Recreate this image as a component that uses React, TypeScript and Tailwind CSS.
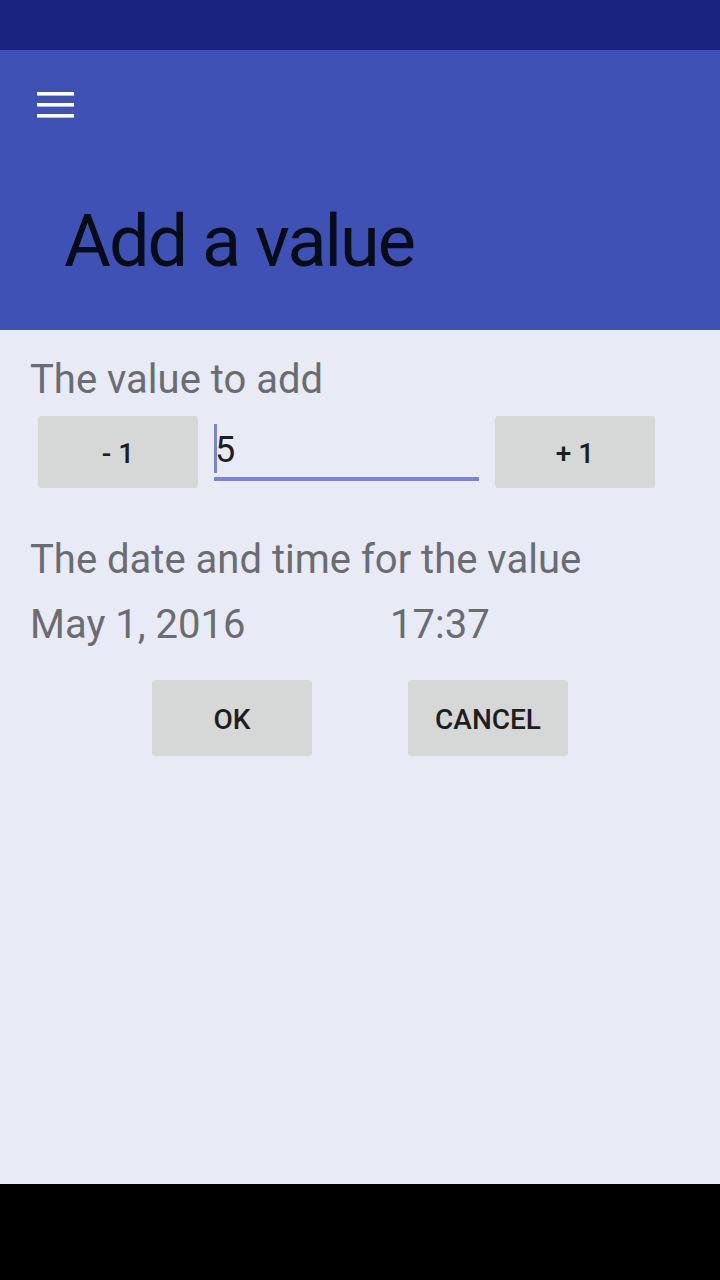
import React from "react";

const font = { fontFamily: "Roboto, 'Noto Sans', sans-serif" };

function Btn({ label }: { label: string }) {
  return (
    <div className="w-[160px] h-[72px] rounded-[3px] bg-[#d6d7d7] flex items-center justify-center pt-[3px] text-[28px] leading-[28px] font-medium text-[#1e1e1f]">
      {label}
    </div>
  );
}

export default function App() {
  return (
    <div className="w-[720px] h-[1280px] flex flex-col bg-[#e8eaf6] overflow-hidden" style={font}>
      <div className="h-[50px] bg-[#1a237e] shrink-0" />
      <div className="h-[280px] bg-[#3f51b5] shrink-0 flex flex-col pt-[42px] pl-[37px]">
        <svg width="37" height="26" viewBox="0 0 37 26" className="block">
          <rect x="0" y="0" width="37" height="3.6" fill="#ffffff" />
          <rect x="0" y="11" width="37" height="3.6" fill="#ffffff" />
          <rect x="0" y="22" width="37" height="3.6" fill="#ffffff" />
        </svg>
        <div className="mt-[88px] ml-[27px] text-[72px] leading-[72px] tracking-[-2px] text-[#080b18]">Add a value</div>
      </div>
      <div className="flex-1 flex flex-col pt-[26px]">
        <div className="pl-[30px] text-[40px] leading-[48px] text-[#6b6c71]">The value to add</div>
        <div className="mt-[12px] pl-[38px] flex items-start">
          <Btn label="- 1" />
          <div className="relative ml-[16px] w-[265px] h-[65px] border-b-[4px] border-[#7986cb]">
            <div className="absolute left-0 top-[8px] w-[3px] h-[49px] bg-[#7986cb]" />
            <div className="pl-[1px] pt-[16px] text-[36px] leading-[36px] text-[#1e1e1f]">5</div>
          </div>
          <div className="ml-[16px]">
            <Btn label="+ 1" />
          </div>
        </div>
        <div className="mt-[48px] pl-[30px] text-[40px] leading-[48px] text-[#6b6c71]">
          The date and time for the value
        </div>
        <div className="mt-[17px] pl-[30px] flex text-[40px] leading-[48px] text-[#6b6c71]">
          <div className="w-[360px]">May 1, 2016</div>
          <div>17:37</div>
        </div>
        <div className="mt-[31px] flex justify-center gap-[96px]">
          <div className="w-[160px] h-[76px] rounded-[3px] bg-[#d6d7d7] flex items-center justify-center pt-[3px] text-[28px] leading-[28px] font-medium text-[#1e1e1f]">
            OK
          </div>
          <div className="w-[160px] h-[76px] rounded-[3px] bg-[#d6d7d7] flex items-center justify-center pt-[3px] text-[28px] leading-[28px] font-medium text-[#1e1e1f]">
            CANCEL
          </div>
        </div>
      </div>
      <div className="h-[96px] bg-black shrink-0" />
    </div>
  );
}
